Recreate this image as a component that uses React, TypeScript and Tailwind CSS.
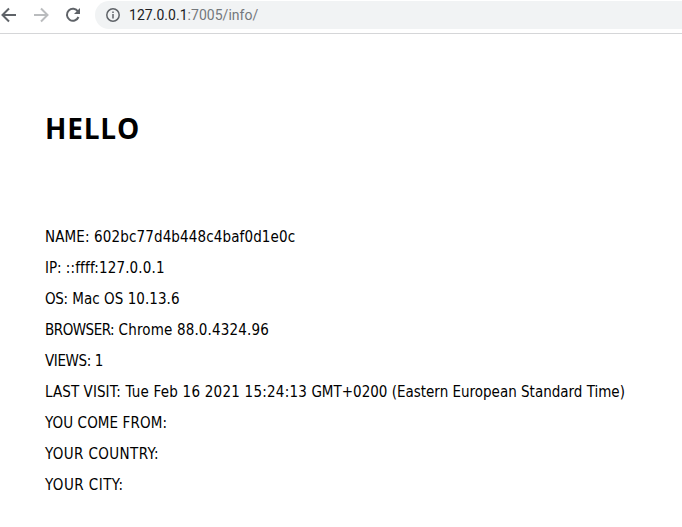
const rows: [string, string, string, string][] = [
  ['NAME:', 'tracking-[0.13px]', ' 602bc77d4b448c4baf0d1e0c', 'tracking-[0.13px]'],
  ['IP:', 'tracking-[-0.1px]', ' ::ffff:127.0.0.1', 'tracking-[0.15px]'],
  ['OS:', 'tracking-[-0.3px]', ' Mac OS 10.13.6', 'tracking-[0.06px]'],
  ['BROWSER:', 'tracking-[-0.5px]', ' Chrome 88.0.4324.96', 'tracking-[0.16px]'],
  ['VIEWS:', 'tracking-[-0.38px]', ' 1', 'tracking-[-0.38px]'],
  ['LAST VISIT:', 'tracking-[0.08px]', ' Tue Feb 16 2021 15:24:13', 'tracking-[0.24px]'],
  ['YOU COME FROM:', 'tracking-[0.1px]', '', ''],
  ['YOUR COUNTRY:', 'tracking-[0.38px]', '', ''],
  ['YOUR CITY:', 'tracking-[0.45px]', '', ''],
];

export default function App() {
  return (
    <div className="h-[527px] w-[682px] overflow-hidden bg-white text-black">
      <header className="flex h-[34px] items-start border-b border-[#d5d6d8]">
        <svg width="95" height="30" viewBox="0 0 95 30" fill="none" strokeWidth="2" className="shrink-0">
          <path d="M16 15H3M9 8.5L2.5 15L9 21.5" stroke="#5f6368" />
          <path d="M34 15H47M41 8.5L47.500 15L41 21.5" stroke="#babcbe" />
          <path d="M78 11.5A6 6 0 1 0 78.500 17" stroke="#5f6368" />
          <path d="M80 8V14H74Z" fill="#5f6368" />
        </svg>
        <div className="mt-px flex h-7 flex-1 items-center rounded-l-full bg-[#f1f3f4] pl-[11px]">
          <svg width="14" height="14" viewBox="0 0 14 14" fill="none" stroke="#5f6368" strokeWidth="1.5">
            <circle cx="7" cy="7" r="6.2" />
            <path d="M7 6V10.500M7 3.500V5" />
          </svg>
          <span className="ml-[9px] font-['Roboto',sans-serif] text-[14px] leading-5 tracking-[0.03px] text-[#74787c]">
            <span className="text-[#202124]">127.0.0.1</span>:7005/info/
          </span>
        </div>
      </header>
      <main className="pl-[45px] pt-[74px]">
        <h1 className="h-10 font-['Open_Sans',sans-serif] text-[28px] font-bold leading-10 tracking-[0.8px]">HELLO</h1>
        <div className="pt-[74px] font-['DejaVu_Sans_Condensed','DejaVu_Sans',sans-serif] [font-stretch:condensed]">
          {rows.map(([label, labelTracking, value, valueTracking]) => (
            <p key={label} className="h-[31px] whitespace-nowrap text-[15px] leading-[31px]">
              <span className={labelTracking}>{label}</span>
              <span className={valueTracking}>{value}</span>
              {label === 'LAST VISIT:' && <span> GMT+0200 (Eastern European Standard Time)</span>}
            </p>
          ))}
        </div>
      </main>
    </div>
  );
}
